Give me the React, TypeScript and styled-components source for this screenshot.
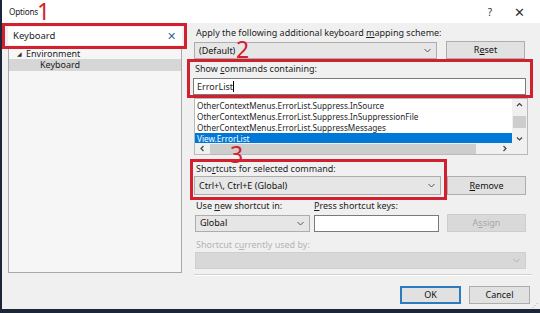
import React from "react";
import styled, { createGlobalStyle } from "styled-components";

const Global = createGlobalStyle`
  html, body { margin: 0; padding: 0; background: #f0f0f0; }
  body { font-family: "Noto Sans", "Liberation Sans", sans-serif; font-size: 9px; line-height: 12px; color: #1e1e1e; }
  u { text-decoration-thickness: 1px; text-underline-offset: 1px; }
`;

const Window = styled.div`
  position: relative;
  width: 540px;
  height: 313px;
  box-sizing: border-box;
  background: #f0f0f0;
  border-left: 2px solid #1b2738;
  border-bottom: 4px solid #1b2738;
  overflow: hidden;
  display: flex;
  flex-direction: column;
`;

const TitleBar = styled.div`
  height: 23px;
  flex: none;
  background: #ffffff;
  display: flex;
  align-items: center;
  padding-left: 7px;
`;

const Title = styled.span`
  font-size: 8.2px;
  letter-spacing: -0.2px;
  color: #1a1a1a;
`;

const TitleButtons = styled.div`
  margin-left: auto;
  display: flex;
  align-items: center;
  gap: 22px;
  padding-right: 15px;
  font-size: 10px;
  color: #333;
`;

const Mark = styled.span<{ $x: number; $y: number }>`
  position: absolute;
  left: ${(p) => p.$x}px;
  top: ${(p) => p.$y}px;
  color: #d2202f;
  font-size: 23px;
  line-height: 17px;
  font-family: "Noto Sans", sans-serif;
  pointer-events: none;
`;

const Body = styled.div`
  flex: 1;
  display: flex;
`;

const LeftPane = styled.div`
  width: 185px;
  flex: none;
  display: flex;
  flex-direction: column;
`;

const RedBox = styled.div<{ $pad?: string; $w?: number }>`
  border: 3px solid #d2202f;
  padding: ${(p) => p.$pad || "0"};
  width: ${(p) => (p.$w ? `${p.$w}px` : "auto")};
  box-sizing: border-box;
`;

const SearchBox = styled.div`
  height: 18px;
  background: #fff;
  display: flex;
  align-items: center;
  padding: 0 6px 0 5px;
  font-size: 9.5px;
`;

const ClearX = styled.span`
  margin-left: auto;
  color: #2c6f8e;
  font-size: 11px;
`;

const Tree = styled.div`
  margin: 0 0 0 6px;
  width: 174px;
  height: 224px;
  box-sizing: border-box;
  border: 1px solid #a9a9a9;
  border-top: none;
  background: #f6f6f6;
`;

const TreeRow = styled.div<{ $indent: number; $selected?: boolean; $h: number }>`
  height: ${(p) => p.$h}px;
  line-height: ${(p) => p.$h}px;
  display: flex;
  align-items: center;
  padding-left: ${(p) => p.$indent}px;
  background: ${(p) => (p.$selected ? "#d6d6d6" : "transparent")};
  color: #222;
  font-size: 9px;
`;

const Caret = styled.span`
  width: 9px;
  font-size: 6px;
  color: #333;
`;

const RightPane = styled.div`
  flex: 1;
  display: flex;
  flex-direction: column;
  padding-top: 4px;
`;

const Label = styled.div<{ $disabled?: boolean; $w?: number; $inset?: number; $h?: number }>`
  height: ${(p) => p.$h || 12}px;
  line-height: ${(p) => p.$h || 12}px;
  box-sizing: border-box;
  width: ${(p) => (p.$w ? `${p.$w}px` : "auto")};
  padding-left: ${(p) => p.$inset ?? 9}px;
  color: ${(p) => (p.$disabled ? "#b4b4b4" : "#1e1e1e")};
  white-space: nowrap;
`;

const Row = styled.div<{ $mt?: number; $inset?: number; $gap?: number }>`
  display: flex;
  align-items: flex-end;
  margin-top: ${(p) => p.$mt || 0}px;
  padding-left: ${(p) => p.$inset || 0}px;
  gap: ${(p) => p.$gap || 0}px;
`;

const ComboBox = styled.div<{ $w: number; $h?: number; $disabled?: boolean }>`
  width: ${(p) => p.$w}px;
  height: ${(p) => p.$h || 17}px;
  box-sizing: border-box;
  border: 1px solid ${(p) => (p.$disabled ? "#cfcfcf" : "#adadad")};
  background: ${(p) => (p.$disabled ? "#d8d8d8" : "#e6e6e6")};
  display: flex;
  align-items: center;
  padding-left: 4px;
  color: #111;
`;

const Chevron = styled.svg`
  margin-left: auto;
  margin-right: 5px;
`;

const Button = styled.div<{ $disabled?: boolean; $default?: boolean; $w?: number; $h?: number; $mb?: number }>`
  width: ${(p) => p.$w || 79}px;
  height: ${(p) => p.$h || 18}px;
  margin-bottom: ${(p) => p.$mb || 0}px;
  box-sizing: border-box;
  border: 1px solid ${(p) => (p.$default ? "#2a7cbf" : p.$disabled ? "#cdcdcd" : "#adadad")};
  box-shadow: ${(p) => (p.$default ? "inset 0 0 0 1px #2a7cbf" : "none")};
  background: ${(p) => (p.$disabled ? "#d9d9d9" : "#e1e1e1")};
  color: ${(p) => (p.$disabled ? "#a8a8a8" : "#111")};
  display: flex;
  align-items: center;
  justify-content: center;
`;

const TextBox = styled.div<{ $w: number; $mt?: number }>`
  width: ${(p) => p.$w}px;
  height: 17px;
  margin-top: ${(p) => p.$mt || 0}px;
  box-sizing: border-box;
  border: 1px solid #7a7a7a;
  background: #fff;
  display: flex;
  align-items: center;
  padding-left: 3px;
`;

const Cursor = styled.span`
  display: inline-block;
  width: 1px;
  height: 11px;
  background: #000;
`;

const ListBox = styled.div`
  margin-left: 7px;
  width: 334px;
  height: 57px;
  box-sizing: border-box;
  border: 1px solid #b9b9b9;
  background: #fff;
  display: grid;
  grid-template-columns: 1fr 15px;
  grid-template-rows: 44px 11px;
`;

const ListItems = styled.div`
  padding-top: 1px;
  overflow: hidden;
`;

const ListItem = styled.div<{ $selected?: boolean }>`
  height: 11px;
  line-height: 11px;
  padding-left: 2px;
  font-size: 8.2px;
  background: ${(p) => (p.$selected ? "#0078d7" : "transparent")};
  color: ${(p) => (p.$selected ? "#fff" : "#1e1e1e")};
  white-space: nowrap;
`;

const VScroll = styled.div`
  background: #f0f0f0;
  display: flex;
  flex-direction: column;
  align-items: center;
  justify-content: space-between;
  padding: 3px 0 2px;
`;

const VThumb = styled.div`
  width: 13px;
  height: 12px;
  background: #cdcdcd;
`;

const HScroll = styled.div`
  background: #f0f0f0;
  display: flex;
  align-items: center;
  padding: 0 4px;
  gap: 4px;
`;

const HThumb = styled.div`
  width: 266px;
  height: 10px;
  background: #cdcdcd;
`;

const RightArrowSlot = styled.span`
  margin-left: auto;
  display: flex;
`;

const Corner = styled.div`
  background: #f0f0f0;
`;

const Separator = styled.div`
  margin: 5px 8px 0 7px;
  height: 1px;
  background: #d0d0d0;
  border-bottom: 1px solid #fff;
`;

const Footer = styled.div`
  display: flex;
  justify-content: flex-end;
  gap: 8px;
  margin-top: 10px;
  padding-right: 10px;
`;

const CloseGlyph = styled.span`
  font-size: 13px;
`;

const Grip = styled.span`
  position: absolute;
  right: 2px;
  bottom: 1px;
  font-size: 6px;
  line-height: 6px;
  color: #999;
`;

const ChevronDown = ({ color = "#555" }: { color?: string }) => (
  <Chevron width="7" height="5" viewBox="0 0 7 5">
    <path d="M0.5 1 L3.5 4 L6.5 1" fill="none" stroke={color} strokeWidth="1" />
  </Chevron>
);

const Arrow = ({ dir }: { dir: "up" | "down" | "left" | "right" }) => {
  const d = {
    up: "M1 4 L3.5 1.5 L6 4",
    down: "M1 1.5 L3.5 4 L6 1.5",
    left: "M4.5 1 L2 3.5 L4.5 6",
    right: "M2.5 1 L5 3.5 L2.5 6",
  }[dir];
  const vertical = dir === "up" || dir === "down";
  return (
    <svg width={7} height={vertical ? 5 : 7} viewBox={vertical ? "0 0 7 5" : "0 0 7 7"}>
      <path d={d} fill="none" stroke="#444" strokeWidth="1.2" />
    </svg>
  );
};

const commands = [
  "OtherContextMenus.ErrorList.Suppress.InSource",
  "OtherContextMenus.ErrorList.Suppress.InSuppressionFile",
  "OtherContextMenus.ErrorList.SuppressMessages",
];

export default function App() {
  return (
    <>
      <Global />
      <Window>
        <TitleBar>
          <Title>Options</Title>
          <TitleButtons>
            <span>?</span>
            <CloseGlyph>✕</CloseGlyph>
          </TitleButtons>
        </TitleBar>
        <Mark $x={35} $y={3}>1</Mark>
        <Mark $x={234} $y={41}>2</Mark>
        <Mark $x={228} $y={146}>3</Mark>
        <Body>
          <LeftPane>
            <RedBox $pad="1px 2px 1px 3px">
              <SearchBox>
                Keyboard
                <ClearX>✕</ClearX>
              </SearchBox>
            </RedBox>
            <Tree>
              <TreeRow $indent={8} $h={10}>
                <Caret>◢</Caret>Environment
              </TreeRow>
              <TreeRow $indent={31} $h={12} $selected>
                Keyboard
              </TreeRow>
            </Tree>
          </LeftPane>
          <RightPane>
            <Label>
              Apply the following additional keyboard <u>m</u>apping scheme:
            </Label>
            <Row $mt={2} $inset={7} $gap={9}>
              <ComboBox $w={243}>
                (Default)
                <ChevronDown />
              </ComboBox>
              <Button>
                R<u>e</u>set
              </Button>
            </Row>
            <RedBox $pad="1px 4px 0 3px" $w={346}>
              <Label $inset={2}>
                Show <u>c</u>ommands containing:
              </Label>
              <TextBox $w={333} $mt={3}>
                ErrorList
                <Cursor />
              </TextBox>
            </RedBox>
            <ListBox>
              <ListItems>
                {commands.map((c) => (
                  <ListItem key={c}>{c}</ListItem>
                ))}
                <ListItem $selected>View.ErrorList</ListItem>
              </ListItems>
              <VScroll>
                <Arrow dir="up" />
                <VThumb />
                <Arrow dir="down" />
              </VScroll>
              <HScroll>
                <Arrow dir="left" />
                <HThumb />
                <RightArrowSlot>
                  <Arrow dir="right" />
                </RightArrowSlot>
              </HScroll>
              <Corner />
            </ListBox>
            <Row $mt={4} $inset={3}>
              <RedBox $pad="1px 3px 2px 1px" $w={257}>
                <Label $inset={2} $h={11}>
                  Sho<u>r</u>tcuts for selected command:
                </Label>
                <ComboBox $w={247} $h={19} style={{ marginTop: 2 }}>
                  Ctrl+\, Ctrl+E (Global)
                  <ChevronDown />
                </ComboBox>
              </RedBox>
              <Button $h={19} $mb={5}>
                <u>R</u>emove
              </Button>
            </Row>
            <Row>
              <Label $w={127}>
                Use <u>n</u>ew shortcut in:
              </Label>
              <Label $inset={0}>
                <u>P</u>ress shortcut keys:
              </Label>
            </Row>
            <Row $mt={2} $inset={8} $gap={4} style={{ alignItems: "center" }}>
              <ComboBox $w={115}>
                Global
                <ChevronDown />
              </ComboBox>
              <TextBox $w={125} />
              <Button $disabled style={{ marginLeft: 4 }}>
                A<u>s</u>sign
              </Button>
            </Row>
            <Label $disabled style={{ marginTop: 7 }}>
              Shortcut c<u>u</u>rrently used by:
            </Label>
            <Row $mt={1} $inset={8}>
              <ComboBox $w={331} $disabled>
                <ChevronDown color="#b0b0b0" />
              </ComboBox>
            </Row>
            <Separator />
            <Footer>
              <Button $default $w={61}>OK</Button>
              <Button $w={61}>Cancel</Button>
            </Footer>
          </RightPane>
        </Body>
        <Grip>⋰</Grip>
      </Window>
    </>
  );
}
